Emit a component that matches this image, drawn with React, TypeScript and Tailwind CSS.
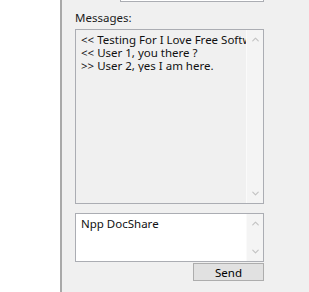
import { ChevronUp, ChevronDown } from 'lucide-react'

const ScrollTrack = ({ up, down }: { up: string; down: string }) => (
  <div className="absolute right-0 top-0 bottom-0 w-[17px] flex flex-col justify-between items-center bg-[#f4f4f4] border-l border-[#fafafa]">
    <ChevronUp className={`w-[11px] h-[11px] text-[#c3c3c3] ${up}`} strokeWidth={2.5} />
    <ChevronDown className={`w-[11px] h-[11px] text-[#c3c3c3] ${down}`} strokeWidth={2.5} />
  </div>
)

const App = () => {
  return (
    <div className="w-[309px] h-[292px] flex bg-white overflow-hidden font-['Noto_Sans',sans-serif] text-[11.5px] text-black">
      <div className="w-[60px] shrink-0 bg-white" />

      {/* dialog panel */}
      <div className="flex-1 bg-[#f0f0f0] border-l-2 border-l-[#a9a9a9] pl-[13px]">
        <div className="ml-[45px] w-[144px] h-[2px] border-x border-b border-[#abadb3] bg-white" />

        <div className="mt-[8px] h-[15px] leading-[15px] text-[#1a1a1a]">Messages:</div>

        <div className="relative mt-[4px] w-[189px] h-[175px] border border-[#abadb3] bg-[#f0f0f0] overflow-hidden">
          <div className="pl-[5px] pt-[3px] pr-[18px] leading-[13px] whitespace-nowrap overflow-hidden text-[#111]">
            <div>&lt;&lt; Testing For I Love Free Software</div>
            <div>&lt;&lt; User 1, you there ?</div>
            <div>&gt;&gt; User 2, yes I am here.</div>
          </div>
          <ScrollTrack up="mt-[4px]" down="mb-[4px]" />
        </div>

        <div className="relative mt-[9px] w-[189px] h-[49px] border border-[#abadb3] bg-white overflow-hidden">
          <div className="pl-[5px] pt-[3px] leading-[14px] whitespace-nowrap text-[#111]">Npp DocShare</div>
          <ScrollTrack up="mt-[4px]" down="mb-[4px]" />
        </div>

        <div className="flex">
          <button className="ml-[118px] mt-[1px] w-[71px] h-[18px] border border-[#adadad] bg-[#e1e1e1] text-[11.5px] leading-[15px] text-black">
            Send
          </button>
        </div>
      </div>
    </div>
  )
}

export default App
